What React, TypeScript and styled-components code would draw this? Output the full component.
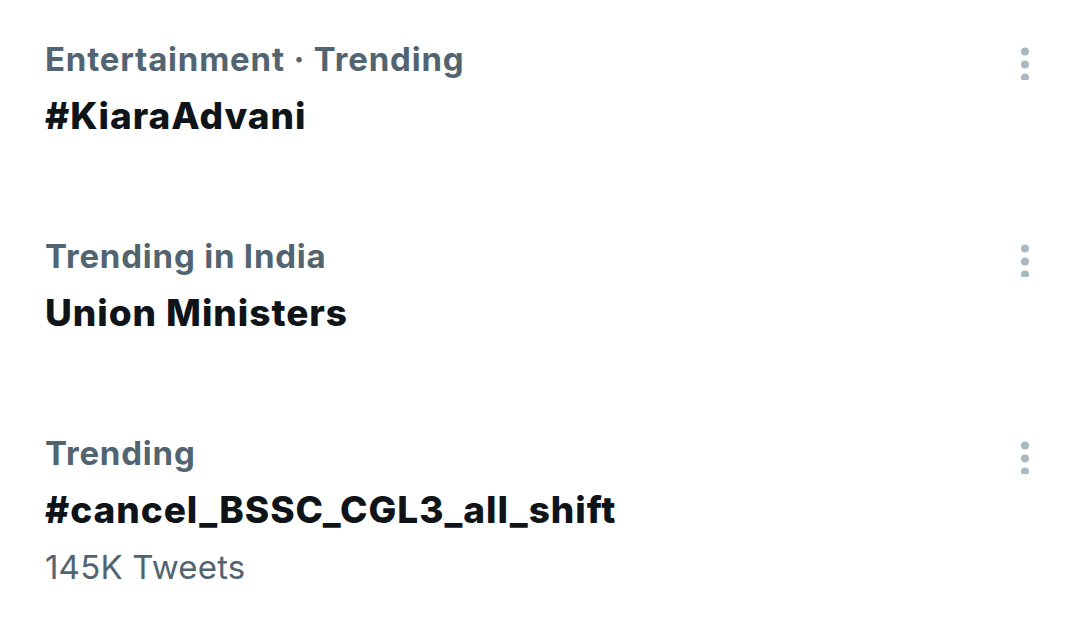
import React from "react";
import styled, { createGlobalStyle } from "styled-components";

const Global = createGlobalStyle`
  html, body { margin: 0; padding: 0; background: #ffffff; }
  body { font-family: Inter, "Noto Sans", "Liberation Sans", sans-serif; -webkit-font-smoothing: antialiased; }
`;

const List = styled.div`
  display: flex;
  flex-direction: column;
  gap: 95px;
  padding: 39px 43px 0 45px;
`;

const Row = styled.div`
  display: flex;
  justify-content: space-between;
  align-items: flex-start;
`;

const Texts = styled.div`
  display: flex;
  flex-direction: column;
`;

const Category = styled.div`
  font-size: 33px;
  line-height: 40px;
  font-weight: 700;
  color: #536471;
  letter-spacing: 0.8px;
`;

const Title = styled.div`
  font-size: 37px;
  line-height: 50px;
  font-weight: 800;
  color: #0f1419;
  margin-top: 12px;
  letter-spacing: 0.95px;
`;

const Count = styled.div`
  font-size: 33px;
  line-height: 40px;
  font-weight: 400;
  color: #536471;
  margin-top: 12px;
  letter-spacing: 0.2px;
`;

const MoreButton = styled.div`
  width: 24px;
  height: 40px;
  display: flex;
  align-items: center;
  justify-content: center;
  margin-top: 1px;
`;

const MoreIcon = () => (
  <svg width="12" height="40" viewBox="0 0 12 40">
    <circle cx="6" cy="11.5" r="4" fill="#aab8c2" />
    <circle cx="6" cy="24.5" r="4" fill="#aab8c2" />
    <circle cx="6" cy="37.5" r="4" fill="#aab8c2" />
  </svg>
);

type Trend = { category: string; title: string; count?: string };

const trends: Trend[] = [
  { category: "Entertainment · Trending", title: "#KiaraAdvani" },
  { category: "Trending in India", title: "Union Ministers" },
  { category: "Trending", title: "#cancel_BSSC_CGL3_all_shift", count: "145K Tweets" },
];

export default function App() {
  return (
    <>
      <Global />
      <List>
        {trends.map((t) => (
          <Row key={t.title}>
            <Texts>
              <Category>{t.category}</Category>
              <Title>{t.title}</Title>
              {t.count && <Count>{t.count}</Count>}
            </Texts>
            <MoreButton>
              <MoreIcon />
            </MoreButton>
          </Row>
        ))}
      </List>
    </>
  );
}
